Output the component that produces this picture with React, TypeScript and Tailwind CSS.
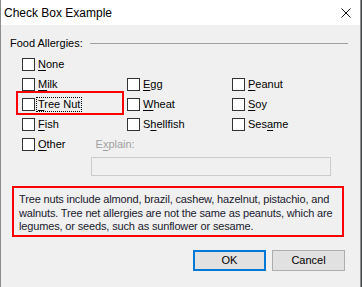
import { useState } from "react"

type Item = { label: string; key: number; checked?: boolean }

const rows: (Item | null)[][] = [
  [{ label: "None", key: 0 }, null, null],
  [{ label: "Milk", key: 0 }, { label: "Egg", key: 0 }, { label: "Peanut", key: 0 }],
  [{ label: "Tree Nut", key: 0 }, { label: "Wheat", key: 0 }, { label: "Soy", key: 0 }],
  [{ label: "Fish", key: 0 }, { label: "Shellfish", key: 1 }, { label: "Sesame", key: 3 }],
]

function Mnemonic({ text, at }: { text: string; at: number }) {
  return (
    <>
      {text.slice(0, at)}
      <span className="underline underline-offset-2">{text[at]}</span>
      {text.slice(at + 1)}
    </>
  )
}

function Check({ item, focused }: { item: Item; focused?: boolean }) {
  const [on, setOn] = useState(false)
  return (
    <label className="relative flex items-center h-[20px] cursor-default select-none" onClick={() => setOn(!on)}>
      <span className="w-[13px] h-[13px] bg-white border border-[#333333] flex items-center justify-center">
        {on && (
          <svg width="9" height="9" viewBox="0 0 9 9">
            <path d="M1 4.5 L3.5 7 L8 1.5" stroke="#000" strokeWidth="1.4" fill="none" />
          </svg>
        )}
      </span>
      <span
        className={
          focused
            ? "ml-[2px] px-[1px] leading-[13px] outline outline-1 outline-dotted outline-black"
            : "ml-[3px] leading-[13px]"
        }
      >
        <Mnemonic text={item.label} at={item.key} />
      </span>
      {focused && <span className="absolute left-[-6px] top-[-3px] w-[108px] h-[24px] border-2 border-[#ff0000]"></span>}
    </label>
  )
}

export default function App() {
  return (
    <div className="w-[362px] h-[287px] bg-[#3f5050] font-['Liberation_Sans',Arial,sans-serif] text-[11px] text-black">
      <div className="w-[361px] h-[287px] bg-[#f0f0f0] border-x border-[#8c8c8c] flex flex-col">
        {/* title bar */}
        <div className="h-[25px] bg-white flex items-center justify-between pl-[3px] pr-[9px] shrink-0">
          <span className="text-[12px] text-black">Check Box Example</span>
          <svg width="10" height="10" viewBox="0 0 10 10">
            <path d="M0.5 0.5 L9.5 9.5 M9.5 0.5 L0.5 9.5" stroke="#111" strokeWidth="1" />
          </svg>
        </div>

        <div className="flex flex-col pl-[9px] pr-[12px]">
          <div className="flex items-center mt-[11px] h-[14px]">
            <span>Food Allergies:</span>
            <span className="flex-1 h-px bg-[#a0a0a0] ml-[7px]"></span>
          </div>

          <div className="grid grid-cols-[105px_105px_105px] pl-[12px] mt-[4px]">
            {rows.map((row, r) =>
              row.map((item, c) =>
                item ? (
                  <Check key={`${r}-${c}`} item={item} focused={item.label === "Tree Nut"} />
                ) : (
                  <div key={`${r}-${c}`} />
                )
              )
            )}
          </div>

          <div className="flex items-center pl-[12px] h-[20px]">
            <Check item={{ label: "Other", key: 0 }} />
            <span className="ml-[30px] text-[#a0a0a0]">
              <Mnemonic text="Explain:" at={1} />
            </span>
          </div>

          <div className="ml-[81px] mt-[3px] w-[240px] h-[19px] border border-[#cccccc] bg-[#f0f0f0]"></div>

          <div className="mt-[10px] ml-[2px] w-[332px] h-[51px] border-2 border-[#ff0000] pl-[5px] pt-[5px] leading-[13.5px] tracking-[-0.15px] text-[#1a1a2e]">
            Tree nuts include almond, brazil, cashew, hazelnut, pistachio, and
            <br />
            walnuts. Tree net allergies are not the same as peanuts, which are
            <br />
            legumes, or seeds, such as sunflower or sesame.
          </div>

          <div className="flex justify-end gap-[6px] mt-[13px] pr-[3px]">
            <button className="w-[73px] h-[21px] bg-[#e1e1e1] border-2 border-[#0078d7] text-[11px]">OK</button>
            <button className="w-[73px] h-[21px] bg-[#e1e1e1] border border-[#adadad] text-[11px]">Cancel</button>
          </div>
        </div>
      </div>
    </div>
  )
}
